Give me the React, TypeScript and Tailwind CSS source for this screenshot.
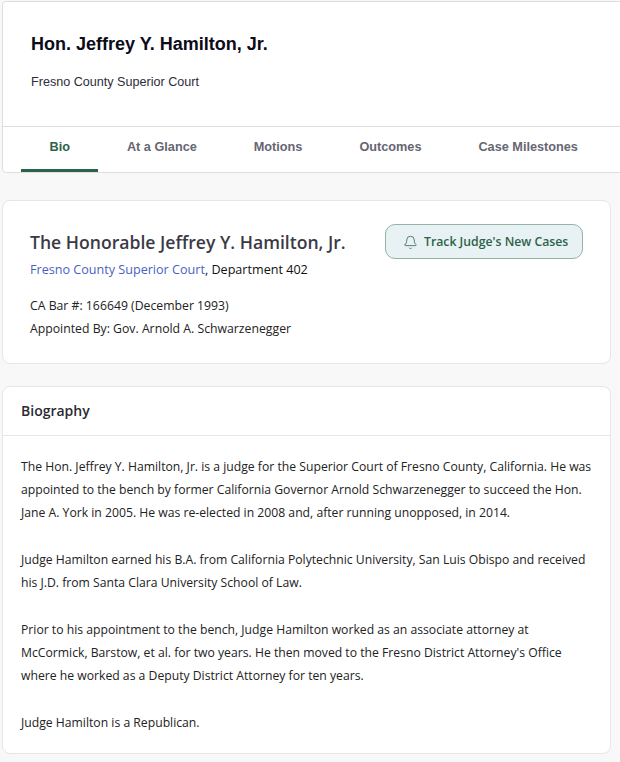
import { Bell } from "lucide-react";

const tabs = ["Bio", "At a Glance", "Motions", "Outcomes", "Case Milestones"];

const paragraphs = [
  "The Hon. Jeffrey Y. Hamilton, Jr. is a judge for the Superior Court of Fresno County, California. He was appointed to the bench by former California Governor Arnold Schwarzenegger to succeed the Hon. Jane A. York in 2005. He was re-elected in 2008 and, after running unopposed, in 2014.",
  "Judge Hamilton earned his B.A. from California Polytechnic University, San Luis Obispo and received his J.D. from Santa Clara University School of Law.",
  "Prior to his appointment to the bench, Judge Hamilton worked as an associate attorney at McCormick, Barstow, et al. for two years. He then moved to the Fresno District Attorney's Office where he worked as a Deputy District Attorney for ten years.",
  "Judge Hamilton is a Republican.",
];

export default function App() {
  return (
    <div className="h-[762px] overflow-hidden bg-[#f8f8f8] pt-px pl-[2px] font-['Open_Sans',sans-serif] text-[#212529]">
      {/* Header card runs off the right edge */}
      <header className="w-[640px] h-[172px] bg-white border border-[#dedede] rounded-l-[4px]">
        <div className="h-[124px] pl-[28px] pt-[32px] font-['Liberation_Sans',sans-serif]">
          <h1 className="text-[18px] leading-[20px] font-bold text-[#0b0b1a]">Hon. Jeffrey Y. Hamilton, Jr.</h1>
          <p className="mt-[18px] text-[12.6px] leading-[20px] text-[#2d2d3a]">Fresno County Superior Court</p>
        </div>
        <nav className="h-[46px] border-t border-[#dedede] pl-[18px] flex font-['Liberation_Sans',sans-serif]">
          {tabs.map((t, i) => (
            <div
              key={t}
              className={
                i === 0
                  ? "px-[28.5px] pt-[12px] text-[12.7px] leading-[16px] font-bold text-[#2b6349] border-b-[3px] border-[#2b6349]"
                  : "px-[28.5px] pt-[12px] text-[12.7px] leading-[16px] font-bold text-[#666673]"
              }
            >
              {t}
            </div>
          ))}
        </nav>
      </header>

      {/* Judge summary */}
      <section className="mt-[27px] w-[609px] h-[164px] bg-white border border-[#e6e6e6] rounded-[8px] pl-[27px] pr-[27px] pt-[27px]">
        <div className="flex justify-between items-start">
          <div>
            <h2 className="text-[17.6px] leading-[28px] font-semibold text-[#3a3a46]">The Honorable Jeffrey Y. Hamilton, Jr.</h2>
            <p className="mt-[4px] text-[12.6px] leading-[20px] text-[#111111]">
              <span className="text-[#4a5fc1]">Fresno County Superior Court</span>, Department 402
            </p>
          </div>
          <button className="mt-[-4px] w-[198px] h-[35px] pt-px pl-[17px] flex items-center gap-[6px] bg-[#e8f1f3] border border-[#92b3a5] rounded-[10px] text-[12.25px] font-semibold text-[#2b6349]">
            <Bell size={15} strokeWidth={1.25} />
            Track Judge's New Cases
          </button>
        </div>
        <p className="mt-[14px] text-[12.25px] leading-[23px] text-[#222222]">CA Bar #: 166649 (December 1993)</p>
        <p className="text-[12.25px] leading-[23px] text-[#222222]">Appointed By: Gov. Arnold A. Schwarzenegger</p>
      </section>

      {/* Biography */}
      <section className="mt-[22px] w-[609px] h-[368px] bg-white border border-[#e6e6e6] rounded-[8px]">
        <h3 className="h-[49px] border-b border-[#e6e6e6] pl-[18px] pt-[14px] text-[14px] leading-[20px] font-semibold text-[#2a2a33]">Biography</h3>
        <div className="pl-[18px] pr-[14px] pt-[18.6px] text-[12.2px] leading-[23.28px] text-[#222222]">
          {paragraphs.map((p, i) => (
            <p key={i} className={i > 0 ? "mt-[23.28px]" : ""}>{p}</p>
          ))}
        </div>
      </section>
    </div>
  );
}
